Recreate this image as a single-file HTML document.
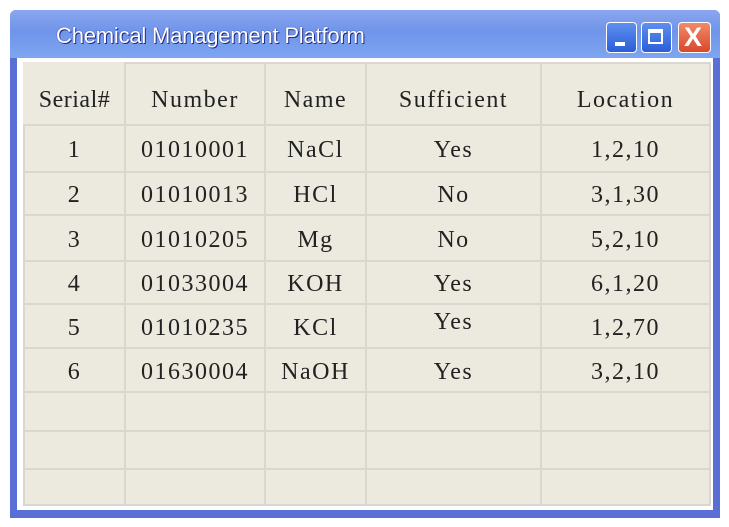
<!DOCTYPE html>
<html><head><style>
body{margin:0;width:729px;height:527px;background:#fff;position:relative;overflow:hidden;font-family:"Liberation Serif",serif}
.win{position:absolute;left:10px;top:10px;width:710px;height:508px;background:#5a6fd6;border-radius:6px 6px 0 0}
.title{position:absolute;left:0;top:0;width:710px;height:48px;border-radius:6px 6px 0 0;background:linear-gradient(#8aa6ee,#6f94ea 45%,#7ea6f0)}
.tt{position:absolute;left:46px;top:13px;font-family:"Liberation Sans",sans-serif;font-size:22px;color:#fff;letter-spacing:-0.2px;text-shadow:1px 1px 0 #1c2a8a,0 0 1px #1c2a8a}
.btn{position:absolute;top:12px;width:31px;height:31px;border:1px solid #fff;border-radius:4px;box-sizing:border-box;background:linear-gradient(#5f8ff0,#2a5ed8)}
.inner{position:absolute;left:7px;top:48px;width:696px;height:452px;background:#fff}
table{position:absolute;left:13px;top:62px;border-collapse:collapse;background:#ece9df}
td{border:2px solid #d9d7d0;text-align:center;font-size:24px;color:#222;padding:4px 0 0 0;height:0;letter-spacing:1.5px}
</style></head><body>
<div class="win"><div class="title"><div class="tt">Chemical Management Platform</div>
<div class="btn" style="left:596px"><div style="position:absolute;left:8px;top:19px;width:10px;height:4px;background:#fff"></div></div>
<div class="btn" style="left:631px"><div style="position:absolute;left:6px;top:6px;width:15px;height:15px;border:2px solid #fff;border-top-width:4px;box-sizing:border-box"></div></div>
<div class="btn" style="left:668px;width:33px;background:linear-gradient(#f08a6a,#d9482a)"><div style="position:absolute;left:5px;top:-1px;color:#fff;font:bold 27px 'Liberation Sans',sans-serif">X</div></div>
</div><div class="inner"></div></div>
<table style="left:23px;top:62px">
<colgroup><col style="width:101px"><col style="width:140px"><col style="width:101px"><col style="width:175px"><col style="width:169px"></colgroup>
<tr style="height:62px"><td style="vertical-align:bottom;padding-bottom:10px;border-top-color:#ece9df;border-left-color:#ece9df;letter-spacing:0.5px">Serial#</td><td style="vertical-align:bottom;padding-bottom:10px">Number</td><td style="vertical-align:bottom;padding-bottom:10px">Name</td><td style="vertical-align:bottom;padding-bottom:10px">Sufficient</td><td style="vertical-align:bottom;padding-bottom:10px">Location</td></tr>
<tr style="height:47px"><td>1</td><td>01010001</td><td>NaCl</td><td>Yes</td><td>1,2,10</td></tr>
<tr style="height:43px"><td>2</td><td>01010013</td><td>HCl</td><td>No</td><td>3,1,30</td></tr>
<tr style="height:46px"><td>3</td><td>01010205</td><td>Mg</td><td>No</td><td>5,2,10</td></tr>
<tr style="height:43px"><td>4</td><td>01033004</td><td>KOH</td><td>Yes</td><td>6,1,20</td></tr>
<tr style="height:44px"><td>5</td><td>01010235</td><td>KCl</td><td style="vertical-align:top">Yes</td><td>1,2,70</td></tr>
<tr style="height:44px"><td>6</td><td>01630004</td><td>NaOH</td><td>Yes</td><td>3,2,10</td></tr>
<tr style="height:39px"><td></td><td></td><td></td><td></td><td></td></tr>
<tr style="height:38px"><td></td><td></td><td></td><td></td><td></td></tr>
<tr style="height:36px"><td></td><td></td><td></td><td></td><td></td></tr>
</table>
</body></html>
